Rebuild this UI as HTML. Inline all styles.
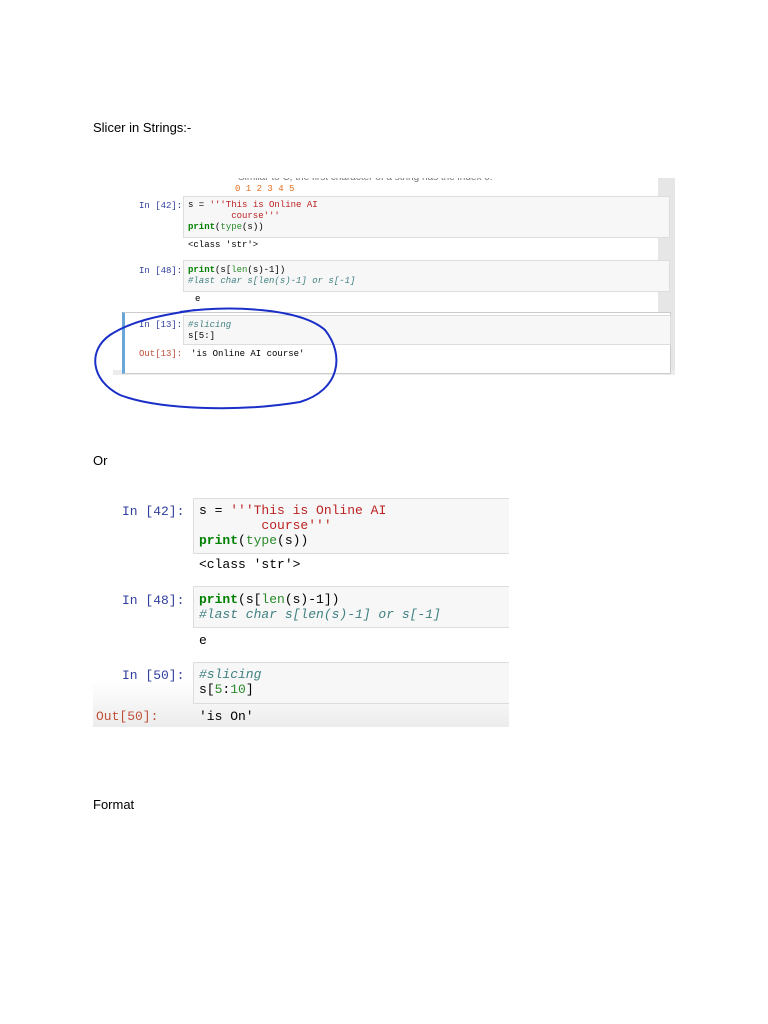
<!DOCTYPE html>
<html><head><meta charset="utf-8"><style>
body{margin:0;width:768px;height:1024px;background:#fff;position:relative;font-family:"Liberation Sans",sans-serif;overflow:hidden}
.a{position:absolute}
.t{font-size:13px;color:#000}
.m{font-family:"Liberation Mono",monospace;white-space:pre}
.box{position:absolute;background:#f7f7f7;border:1px solid #ddd}
.p{color:#303f9f}.o{color:#c0503a}
.k{color:#008000;font-weight:bold}.g{color:#2a8a2a}.s{color:#b22}.c{color:#408080;font-style:italic}
</style></head><body>
<div class="a t" style="left:93px;top:120px">Slicer in Strings:-</div>
<div class="a t" style="left:93px;top:453px">Or</div>
<div class="a t" style="left:93px;top:797px">Format</div>

<div class="a" style="left:113px;top:178px;width:562px;height:197px;background:#fff;overflow:hidden">
 <div class="a" style="left:545px;top:0;width:17px;height:197px;background:#e6e6e6"></div>
 <div class="a" style="left:0;top:192px;width:562px;height:5px;background:#ececec"></div>
 <div class="a m" style="left:125px;top:-6px;font-size:10px;color:#777;font-family:'Liberation Sans'">Similar to C, the first character of a string has the index 0.</div>
 <div class="a m" style="left:122px;top:6px;font-size:9px;color:#e07020">0 1 2 3 4 5</div>
 <div class="a m p" style="left:26px;top:23px;font-size:9px">In [42]:</div>
 <div class="box" style="left:70px;top:18px;width:485px;height:40px"></div>
 <div class="a m" style="left:75px;top:22px;font-size:9px;line-height:11px">s = <span class="s">'''This is Online AI
        course'''</span>
<span class="k">print</span>(<span class="g">type</span>(s))</div>
 <div class="a m" style="left:75px;top:62px;font-size:9px">&lt;class 'str'&gt;</div>
 <div class="a m p" style="left:26px;top:88px;font-size:9px">In [48]:</div>
 <div class="box" style="left:70px;top:82px;width:485px;height:30px"></div>
 <div class="a m" style="left:75px;top:87px;font-size:9px;line-height:11px"><span class="k">print</span>(s[<span class="g">len</span>(s)-1])
<span class="c">#last char s[len(s)-1] or s[-1]</span></div>
 <div class="a m" style="left:82px;top:116px;font-size:9px">e</div>
 <div class="a" style="left:9px;top:134px;width:545px;height:60px;border:1px solid #ccc;border-left:3px solid #6aa7d8;background:#fff"></div>
 <div class="box" style="left:70px;top:137px;width:486px;height:28px"></div>
 <div class="a m p" style="left:26px;top:142px;font-size:9px">In [13]:</div>
 <div class="a m" style="left:75px;top:142px;font-size:9px;line-height:11px"><span class="c">#slicing</span>
s[5:]</div>
 <div class="a m o" style="left:26px;top:171px;font-size:9px">Out[13]:</div>
 <div class="a m" style="left:78px;top:171px;font-size:9px">'is Online AI course'</div>
</div>
<svg class="a" style="left:0;top:0" width="768" height="1024"><path d="M180 312 C230 305 300 308 325 330 C345 355 340 390 300 402 C240 412 160 410 120 395 C90 380 88 350 110 335 C130 322 155 316 195 310" fill="none" stroke="#1a2fc8" stroke-width="2"/></svg>

<div class="a" style="left:93px;top:497px;width:416px;height:230px;background:#fff;overflow:hidden">
 <div class="a" style="left:0;top:183px;width:416px;height:47px;background:linear-gradient(#fff,#ececec)"></div>
 <div class="box" style="left:100px;top:1px;width:320px;height:54px"></div>
 <div class="a m p" style="left:29px;top:7px;font-size:13px">In [42]:</div>
 <div class="a m" style="left:106px;top:6px;font-size:13px;line-height:15px">s = <span class="s">'''This is Online AI
        course'''</span>
<span class="k">print</span>(<span class="g">type</span>(s))</div>
 <div class="a m" style="left:106px;top:60px;font-size:13px">&lt;class 'str'&gt;</div>
 <div class="box" style="left:100px;top:89px;width:320px;height:40px"></div>
 <div class="a m p" style="left:29px;top:96px;font-size:13px">In [48]:</div>
 <div class="a m" style="left:106px;top:95px;font-size:13px;line-height:15px"><span class="k">print</span>(s[<span class="g">len</span>(s)-1])
<span class="c">#last char s[len(s)-1] or s[-1]</span></div>
 <div class="a m" style="left:106px;top:136px;font-size:13px">e</div>
 <div class="box" style="left:100px;top:165px;width:320px;height:40px"></div>
 <div class="a m p" style="left:29px;top:171px;font-size:13px">In [50]:</div>
 <div class="a m" style="left:106px;top:170px;font-size:13px;line-height:15px"><span class="c">#slicing</span>
s[<span class="g">5</span>:<span class="g">10</span>]</div>
 <div class="a m o" style="left:3px;top:212px;font-size:13px">Out[50]:</div>
 <div class="a m" style="left:106px;top:212px;font-size:13px">'is On'</div>
</div>
</body></html>
